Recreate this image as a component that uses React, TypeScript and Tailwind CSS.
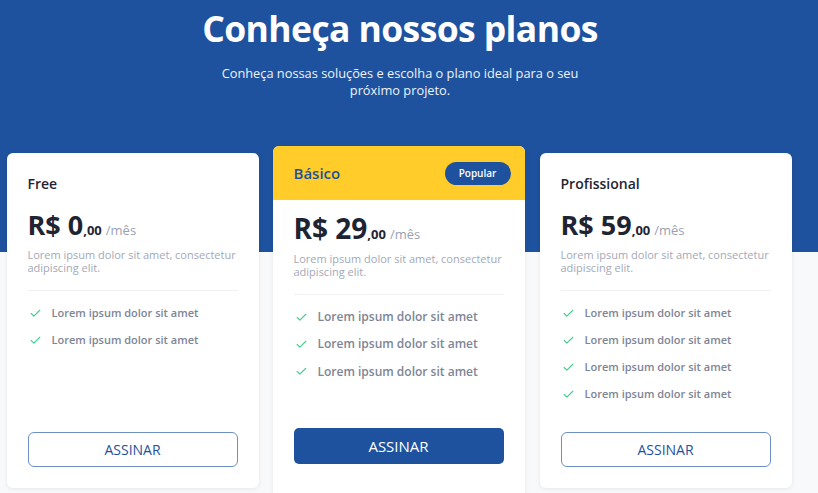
import { Check } from "lucide-react";

type Plan = {
  name: string;
  price: string;
  features: number;
  featured?: boolean;
};

const plans: Plan[] = [
  { name: "Free", price: "0", features: 2 },
  { name: "Básico", price: "29", features: 3, featured: true },
  { name: "Profissional", price: "59", features: 4 },
];

function PlanCard({ plan, last }: { plan: Plan; last?: boolean }) {
  const featured = plan.featured;
  return (
    <div
      className={
        featured
          ? "w-[252px] bg-white rounded-t-[6px] shadow-[0_1px_4px_rgba(0,0,0,0.08)] flex flex-col h-[350px] overflow-hidden"
          : last
          ? "w-[252px] bg-white rounded-[6px] shadow-[0_1px_4px_rgba(0,0,0,0.08)] flex flex-col h-[335px] mt-[7px] ml-[1px]"
          : "w-[252px] bg-white rounded-[6px] shadow-[0_1px_4px_rgba(0,0,0,0.08)] flex flex-col h-[335px] mt-[7px]"
      }
    >
      {featured ? (
        <div className="h-[54px] bg-[#ffcc29] flex items-center justify-between pl-[21px] pr-[14px]">
          <span className="text-[15px] font-semibold text-[#1e529e]">{plan.name}</span>
          <span className="h-[23px] w-[66px] rounded-full bg-[#1e529e] text-white text-[10px] font-semibold flex items-center justify-center">
            Popular
          </span>
        </div>
      ) : (
        <div className="pt-[22px] pl-[21px] text-[14px] font-semibold text-[#1f2433] leading-[18px]">
          {plan.name}
        </div>
      )}
      <div className={featured ? "px-[21px] pt-[10px] flex flex-col flex-1" : "pl-[21px] pr-[21px] pt-[15px] flex flex-col flex-1"}>
        <div className="flex items-baseline text-[#1f2433]">
          <span className={featured ? "text-[28px] font-bold leading-[36px]" : "text-[27px] font-bold leading-[34px]"}>
            R$ {plan.price}
          </span>
          <span className="text-[13px] font-bold">,00</span>
          <span className="text-[13px] text-[#9aa1b1] ml-[4px]">/mês</span>
        </div>
        <p className="mt-[6px] text-[11px] leading-[13px] text-[#a3a9b7]">
          Lorem ipsum dolor sit amet, consectetur adipiscing elit.
        </p>
        <div className="mt-[16px] border-t border-[#eef0f3]" />
        <ul className={featured ? "mt-[13px] flex flex-col gap-[9.3px]" : "mt-[13px] flex flex-col gap-[9px]"}>
          {Array.from({ length: plan.features }).map((_, i) => (
            <li key={i} className="flex items-center h-[18px]">
              <Check size={13} strokeWidth={2} className="text-[#3ecf8e] ml-[1px] mr-[10px]" />
              <span
                className={
                  featured
                    ? "text-[12px] font-semibold text-[#7e8596]"
                    : "text-[11px] font-semibold text-[#7e8596]"
                }
              >
                Lorem ipsum dolor sit amet
              </span>
            </li>
          ))}
        </ul>
        <div className="flex-1" />
        {featured ? (
          <button className="mb-[32px] h-[36px] w-[210px] rounded-[5px] bg-[#1e529e] text-white text-[15px] font-medium">
            ASSINAR
          </button>
        ) : (
          <button className="mb-[21px] h-[35px] w-[210px] rounded-[6px] border border-[#6d8fc4] text-[#1e529e] text-[14px] font-medium">
            ASSINAR
          </button>
        )}
      </div>
    </div>
  );
}

export default function App() {
  return (
    <div className="w-[818px] h-[493px] overflow-hidden bg-[#f8f9fb] relative font-['Open_Sans',sans-serif]">
      <div className="bg-[#1e529e] h-[252px] w-full">
        <div className="w-[800px] flex flex-col items-center pt-[5px]">
          <h1 className="text-[35.5px] font-bold text-white leading-[46px] tracking-[-0.6px]">
            Conheça nossos planos
          </h1>
          <p className="mt-[14px] text-[12.8px] leading-[17px] text-[#eef2f9] text-center w-[380px]">
            Conheça nossas soluções e escolha o plano ideal para o seu próximo projeto.
          </p>
        </div>
      </div>
      <div className="absolute top-[146px] left-0 w-[798px] flex justify-center gap-[14px]">
        {plans.map((p, i) => (
          <PlanCard key={p.name} plan={p} last={i === plans.length - 1} />
        ))}
      </div>
    </div>
  );
}
